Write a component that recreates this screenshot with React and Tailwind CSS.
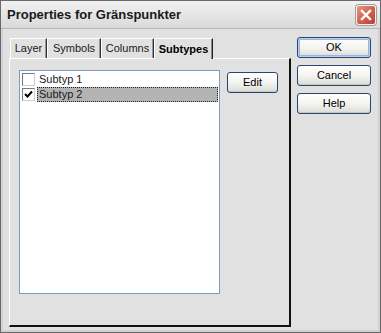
import React from 'react';

const tabs = [
  { label: 'Layer', w: 'w-[37px]' },
  { label: 'Symbols', w: 'w-[54px]' },
  { label: 'Columns', w: 'w-[53px]' },
];

function XpButton({ children, wide, isDefault }) {
  return (
    <button
      className={
        'h-[21px] rounded-[3px] border border-[#2a4570] bg-gradient-to-b from-[#ffffff] via-[#f4f4f2] to-[#dcdcd6] text-[11px] text-black leading-none ' +
        (wide ? 'w-[74px] ' : 'w-[51px] ') +
        (isDefault ? 'shadow-[inset_0_0_0_1px_#b9d0ee,inset_0_0_0_2px_#9ab4dc]' : 'shadow-[inset_0_-1px_0_#c9c9c2]')
      }
    >
      {children}
    </button>
  );
}

function Checkbox({ checked }) {
  return (
    <div className="w-[13px] h-[13px] bg-white border border-t-[#7a7a7a] border-l-[#7a7a7a] border-b-[#cfcfcf] border-r-[#cfcfcf] flex items-center justify-center">
      {checked && (
        <svg width="9" height="9" viewBox="0 0 9 9">
          <path d="M1 4 L3.5 6.5 L8 1.5" stroke="#000" strokeWidth="2" fill="none" />
        </svg>
      )}
    </div>
  );
}

export default function App() {
  return (
    <div className="w-[381px] h-[333px] flex flex-col bg-[#e1e1e1] border border-[#6a6a6a] font-['Liberation_Sans',Arial,sans-serif] text-black overflow-hidden">
      {/* title bar */}
      <div className="h-[28px] flex items-center justify-between pl-[6px] pr-[4px] bg-gradient-to-b from-[#f1f1f1] to-[#dadada] border-b border-[#b8b8b8]">
        <span className="text-[13px] font-bold text-[#1a1a1a]">Properties for Gränspunkter</span>
        <div className="w-[20px] h-[20px] rounded-[3px] border border-[#f4f4f4] bg-gradient-to-br from-[#e79585] via-[#d06450] to-[#b8402e] flex items-center justify-center shadow-[0_0_0_1px_#a89a98]">
          <svg width="12" height="12" viewBox="0 0 12 12">
            <path d="M2 2 L10 10 M10 2 L2 10" stroke="#fff" strokeWidth="2.4" strokeLinecap="square" />
          </svg>
        </div>
      </div>

      {/* body */}
      <div className="flex-1 flex border-x-2 border-b-2 border-[#d2d2d2] pl-[6px] pt-[8px] pb-[3px]">
        <div className="w-[282px] flex flex-col">
          {/* tab strip */}
          <div className="flex items-end pl-[1px] h-[21px]">
            {tabs.map((t) => (
              <div
                key={t.label}
                className={t.w + ' h-[20px] flex items-center justify-center text-[11px] text-[#1a1a1a] border-t border-l border-[#ffffff] border-r border-r-[#303030] shadow-[inset_-1px_0_0_#9a9a9a]'}
              >
                {t.label}
              </div>
            ))}
            <div className="w-[59px] h-[21px] -mb-[1px] bg-[#e1e1e1] flex items-center justify-center text-[11px] font-bold border-t border-l border-[#ffffff] border-r border-r-[#202020] shadow-[inset_-1px_0_0_#8a8a8a] relative z-10">
              Subtypes
            </div>
          </div>
          {/* tab panel */}
          <div className="flex-1 flex items-start border-l border-t border-[#ffffff] border-r-2 border-b-2 border-r-[#111] border-b-[#111] pl-[9px] pt-[10px]">
            <div className="w-[201px] h-[224px] mt-[1px] bg-white border border-[#7f9db9] pt-[1px] flex flex-col">
              <div className="h-[15px] flex items-center pl-[2px]">
                <Checkbox />
                <span className="ml-[2px] pl-[2px] h-[15px] flex items-center text-[11px] text-[#1a1a1a]">Subtyp 1</span>
              </div>
              <div className="h-[15px] flex items-center pl-[2px] pr-[1px]">
                <Checkbox checked />
                <span className="ml-[2px] pl-[1px] flex-1 h-[15px] flex items-center text-[11px] text-[#1a1a1a] bg-[#b3b3b3] border border-dotted border-[#222]">
                  Subtyp 2
                </span>
              </div>
            </div>
            <div className="ml-[7px]">
              <XpButton>Edit</XpButton>
            </div>
          </div>
        </div>

        {/* right buttons */}
        <div className="ml-[6px] flex flex-col gap-[7px]">
          <XpButton wide isDefault>OK</XpButton>
          <XpButton wide>Cancel</XpButton>
          <XpButton wide>Help</XpButton>
        </div>
      </div>
    </div>
  );
}
